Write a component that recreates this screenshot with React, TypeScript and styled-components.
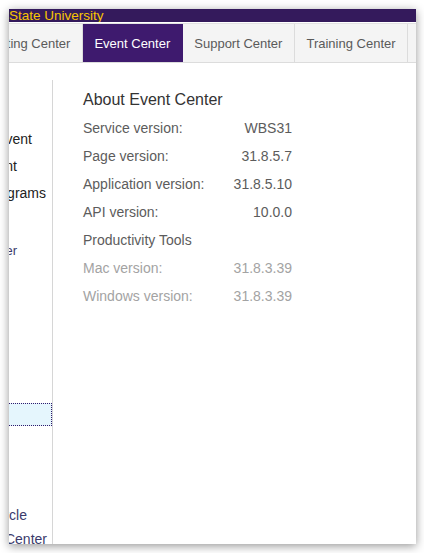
import React from "react";
import styled, { createGlobalStyle } from "styled-components";

const GlobalStyle = createGlobalStyle`
  html, body { margin: 0; padding: 0; background: #ffffff; }
  body { font-family: "Liberation Sans", Arial, sans-serif; }
  * { box-sizing: border-box; }
`;

const Page = styled.div`
  width: 424px;
  height: 553px;
  padding: 9px 8px 9px 9px;
  background: #ffffff;
`;

const Window = styled.div`
  width: 407px;
  height: 535px;
  background: #ffffff;
  box-shadow: 0 2px 9px rgba(0, 0, 0, 0.42);
  overflow: hidden;
  display: flex;
  flex-direction: column;
`;

const Brand = styled.div`
  height: 13px;
  flex: none;
  background: #341a5c;
  color: #f8c500;
  font-size: 13.5px;
  line-height: 13px;
  white-space: nowrap;
  overflow: hidden;
`;

const TabStrip = styled.div`
  flex: none;
  margin-top: 1px;
  border-top: 1px solid #e2e2e2;
  height: 40px;
  background: #f4f4f4;
  border-bottom: 1px solid #dcdcdc;
  display: flex;
  margin-left: -39px;
`;

const Tab = styled.div<{ $active?: boolean }>`
  flex: none;
  display: flex;
  align-items: center;
  padding: 0 11.5px;
  font-size: 13px;
  white-space: nowrap;
  color: ${(p) => (p.$active ? "#ffffff" : "#5a5a5a")};
  background: ${(p) => (p.$active ? "#3e1a6e" : "transparent")};
  border-right: 1px solid ${(p) => (p.$active ? "#3e1a6e" : "#dcdcdc")};
`;

const Body = styled.div`
  flex: 1;
  display: flex;
  padding-top: 17px;
  min-height: 0;
`;

const Sidebar = styled.div`
  width: 44px;
  flex: none;
  border-right: 1px solid #d6d6d6;
  overflow: hidden;
  display: flex;
  flex-direction: column;
  padding-top: 46px;
`;

const SideItem = styled.div<{
  $end: number;
  $gap?: number;
  $small?: boolean;
  $link?: boolean;
  $tight?: boolean;
}>`
  flex: none;
  width: ${(p) => p.$end}px;
  margin-top: ${(p) => p.$gap ?? 0}px;
  display: flex;
  justify-content: flex-end;
  white-space: nowrap;
  font-size: ${(p) => (p.$small ? 13 : 14)}px;
  line-height: ${(p) => (p.$small || p.$tight ? 24 : 27)}px;
  color: ${(p) => (p.$link ? "#3b3b6c" : "#222222")};
`;

const FocusedItem = styled.div<{ $gap: number }>`
  flex: none;
  margin-top: ${(p) => p.$gap}px;
  margin-left: -10px;
  width: 53px;
  height: 23px;
  background: #e5f6fd;
  border: 1px dotted #2e1a6e;
`;

const Main = styled.div`
  flex: 1;
  padding: 6px 0 0 30px;
`;

const Heading = styled.div`
  font-size: 16px;
  line-height: 28px;
  color: #333333;
`;

const InfoGrid = styled.div`
  width: 209px;
  display: grid;
  grid-template-columns: auto 1fr;
`;

const Label = styled.div<{ $dim?: boolean }>`
  font-size: 14px;
  line-height: 28px;
  white-space: nowrap;
  color: ${(p) => (p.$dim ? "#a3a3a3" : "#5c5c5c")};
`;

const Value = styled(Label)`
  text-align: right;
`;

const Section = styled(Label)`
  grid-column: 1 / span 2;
`;

const rows: { label: string; value: string }[] = [
  { label: "Service version:", value: "WBS31" },
  { label: "Page version:", value: "31.8.5.7" },
  { label: "Application version:", value: "31.8.5.10" },
  { label: "API version:", value: "10.0.0" },
];

const toolRows: { label: string; value: string }[] = [
  { label: "Mac version:", value: "31.8.3.39" },
  { label: "Windows version:", value: "31.8.3.39" },
];

export default function App() {
  return (
    <>
      <GlobalStyle />
      <Page>
        <Window>
          <Brand>State University</Brand>
          <TabStrip>
            <Tab>Meeting Center</Tab>
            <Tab $active>Event Center</Tab>
            <Tab>Support Center</Tab>
            <Tab>Training Center</Tab>
            <Tab>Sales Center</Tab>
          </TabStrip>
          <Body>
            <Sidebar>
              <SideItem $end={23}>Schedule an Event</SideItem>
              <SideItem $end={8}>Attendee Management</SideItem>
              <SideItem $end={37}>My Programs</SideItem>
              <SideItem $end={8} $gap={32} $small $link>Event Center</SideItem>
              <FocusedItem $gap={140} />
              <SideItem $end={18} $gap={77} $tight $link>Lifecycle</SideItem>
              <SideItem $end={38} $tight $link>Support Center</SideItem>
            </Sidebar>
            <Main>
              <Heading>About Event Center</Heading>
              <InfoGrid>
                {rows.map((r) => (
                  <React.Fragment key={r.label}>
                    <Label>{r.label}</Label>
                    <Value>{r.value}</Value>
                  </React.Fragment>
                ))}
                <Section>Productivity Tools</Section>
                {toolRows.map((r) => (
                  <React.Fragment key={r.label}>
                    <Label $dim>{r.label}</Label>
                    <Value $dim>{r.value}</Value>
                  </React.Fragment>
                ))}
              </InfoGrid>
            </Main>
          </Body>
        </Window>
      </Page>
    </>
  );
}
